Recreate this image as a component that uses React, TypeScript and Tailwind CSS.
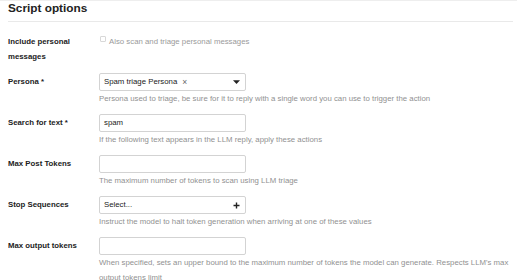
import React from "react";

const font = { fontFamily: '"Liberation Sans", Arial, Helvetica, sans-serif' };

function Caret() {
  return (
    <svg width="7" height="4" viewBox="0 0 7 4" className="ml-auto">
      <path d="M0 0.3 L7 0.3 L3.5 4 Z" fill="#222" />
    </svg>
  );
}

function Plus() {
  return (
    <svg width="7" height="7" viewBox="0 0 7 7" className="ml-auto">
      <path d="M3.5 0.5 V6.5 M0.5 3.5 H6.5" stroke="#222" strokeWidth="1.4" />
    </svg>
  );
}

function Row({
  label,
  desc,
  children,
}: {
  label: string;
  desc: string;
  children: React.ReactNode;
}) {
  return (
    <div className="flex mb-[8px]">
      <div className="w-[91px] shrink-0 font-bold leading-[18px] text-[#222]">
        {label}
      </div>
      <div className="flex-1 min-w-0">
        {children}
        <div className="leading-[15px] text-[#919191]">{desc}</div>
      </div>
    </div>
  );
}

const box =
  "h-[18px] w-[147px] border border-[#d3d3d3] rounded-[2px] bg-white flex items-center pl-[4px] pr-[5px] text-[#222]";

export default function App() {
  return (
    <div
      className="w-[517px] h-[280px] overflow-hidden bg-white border-t border-[#eeeeee] text-[7.8px]"
      style={font}
    >
      <div className="ml-[8px] w-[505px]">
        <div className="h-[21px] border-b border-[#e9e9e9] text-[11.8px] font-bold leading-[14px] text-[#222]">
          Script options
        </div>

        <div className="flex mt-[12px] mb-[9px]">
          <div className="w-[91px] shrink-0 font-bold leading-[15px] text-[#222]">
            Include personal
            <br />
            messages
          </div>
          <div className="flex items-start">
            <span className="ml-[1px] mt-[2px] w-[6px] h-[6px] border border-[#d8d8d8] rounded-[1px] bg-white" />
            <span className="ml-[3px] leading-[15px] text-[#9a9a9a]">
              Also scan and triage personal messages
            </span>
          </div>
        </div>

        <Row
          label="Persona *"
          desc="Persona used to triage, be sure for it to reply with a single word you can use to trigger the action"
        >
          <div className={box}>
            <span>Spam triage Persona</span>
            <span className="ml-[5px] text-[#666] text-[8.5px]">×</span>
            <Caret />
          </div>
        </Row>

        <Row
          label="Search for text *"
          desc="If the following text appears in the LLM reply, apply these actions"
        >
          <div className={box}>spam</div>
        </Row>

        <Row
          label="Max Post Tokens"
          desc="The maximum number of tokens to scan using LLM triage"
        >
          <div className={box} />
        </Row>

        <Row
          label="Stop Sequences"
          desc="Instruct the model to halt token generation when arriving at one of these values"
        >
          <div className={box}>
            <span>Select...</span>
            <Plus />
          </div>
        </Row>

        <Row
          label="Max output tokens"
          desc="When specified, sets an upper bound to the maximum number of tokens the model can generate. Respects LLM's max output tokens limit"
        >
          <div className={box} />
        </Row>
      </div>
    </div>
  );
}
